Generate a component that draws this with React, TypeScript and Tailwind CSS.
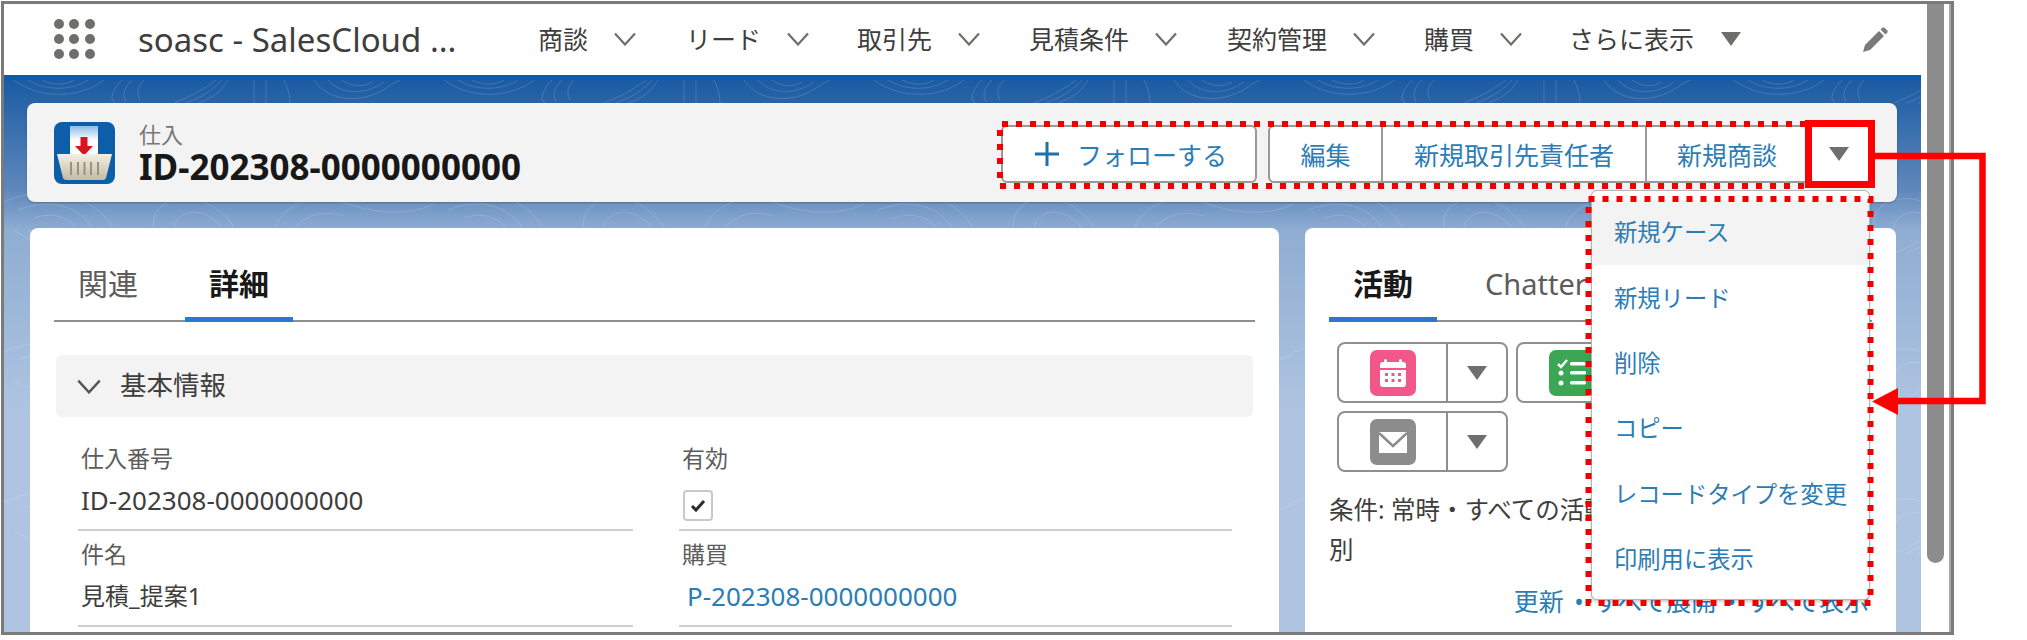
import React from "react";

const navItems = [
  { label: "商談", gap: "mr-[50px]" },
  { label: "リード", gap: "mr-[48px]" },
  { label: "取引先", gap: "mr-[49px]" },
  { label: "見積条件", gap: "mr-[50px]" },
  { label: "契約管理", gap: "mr-[49px]" },
  { label: "購買", gap: "mr-[47px]" },
];

const menuItems = ["新規ケース", "新規リード", "削除", "コピー", "レコードタイプを変更", "印刷用に表示"];

const Chevron: React.FC<{ className?: string }> = ({ className }) => (
  <svg viewBox="0 0 22 14" className={className} fill="none" stroke="currentColor" strokeWidth="2.2">
    <path d="M1 1.5 11 12.5 21 1.5" />
  </svg>
);

const Tri: React.FC<{ className?: string }> = ({ className }) => (
  <svg viewBox="0 0 20 14" className={className} fill="currentColor">
    <path d="M0 0H20L10 14Z" />
  </svg>
);

const BasketIcon = () => (
  <svg viewBox="0 0 61 62" className="h-[62px] w-[61px] shrink-0">
    <defs>
      <linearGradient id="paper" x1="0" y1="0" x2="0" y2="1">
        <stop offset="0" stopColor="#8fbde8" />
        <stop offset="0.45" stopColor="#ffffff" />
        <stop offset="1" stopColor="#ffffff" />
      </linearGradient>
      <linearGradient id="basket" x1="0" y1="0" x2="0" y2="1">
        <stop offset="0" stopColor="#f3efe2" />
        <stop offset="1" stopColor="#c2bba5" />
      </linearGradient>
    </defs>
    <rect width="61" height="62" rx="8" fill="#0d5ea8" />
    <rect x="16" y="4" width="28" height="32" fill="url(#paper)" />
    <path d="M26.500 15h7v9h5.500L30 33.500 21 24h5.500Z" fill="#d8141c" />
    <path d="M3 32h55l-6 24q-1 2-3 2H12q-2 0-3-2Z" fill="url(#basket)" />
    <path d="M17 40v13M24 40v13M30.500 40v13M37 40v13M44 40v13" stroke="#9a937f" strokeWidth="2" />
  </svg>
);

const CalendarIcon = () => (
  <svg viewBox="0 0 46 46" className="h-[46px] w-[46px] shrink-0">
    <rect width="46" height="46" rx="7" fill="#f2578a" />
    <path d="M10 15q0-3 3-3h20q3 0 3 3v3H10Z" fill="#fff" />
    <rect x="14" y="9" width="3" height="6" rx="1.500" fill="#fff" />
    <rect x="29" y="9" width="3" height="6" rx="1.500" fill="#fff" />
    <path d="M10 20h26v14q0 3-3 3H13q-3 0-3-3Z" fill="#fff" />
    <g fill="#f2578a">
      <rect x="15" y="23" width="3" height="3" />
      <rect x="21.500" y="23" width="3" height="3" />
      <rect x="28" y="23" width="3" height="3" />
      <rect x="15" y="29" width="3" height="3" />
      <rect x="21.500" y="29" width="3" height="3" />
      <rect x="28" y="29" width="3" height="3" />
    </g>
  </svg>
);

const TaskIcon = () => (
  <svg viewBox="0 0 46 46" className="h-[46px] w-[46px] shrink-0">
    <rect width="46" height="46" rx="7" fill="#3ba755" />
    <path d="M9 14l3 3 6-7" fill="none" stroke="#fff" strokeWidth="2.500" />
    <rect x="21" y="12" width="16" height="3.500" rx="1.500" fill="#fff" />
    <rect x="21" y="21" width="16" height="3.500" rx="1.500" fill="#fff" />
    <rect x="21" y="31" width="16" height="3.500" rx="1.500" fill="#fff" />
    <circle cx="12" cy="23" r="2.500" fill="#fff" />
    <circle cx="12" cy="33" r="2.500" fill="#fff" />
  </svg>
);

const MailIcon = () => (
  <svg viewBox="0 0 46 46" className="h-[46px] w-[46px] shrink-0">
    <rect width="46" height="46" rx="7" fill="#8c8c8c" />
    <path d="M9 13h28v21H9Z" fill="#fff" />
    <path d="M9 14 23 27 37 14" fill="none" stroke="#8c8c8c" strokeWidth="2.500" />
  </svg>
);

const Field: React.FC<{ label: string; children: React.ReactNode }> = ({ label, children }) => (
  <div className="flex h-[96px] flex-col border-b-2 border-[#cfcfcf]">
    <div className="mt-[9px] h-[28px] pl-[3px] text-[23px] leading-[28px] text-[#5c5c5c]">{label}</div>
    <div className="mt-[13px] h-[30px] pl-[3px] text-[24px] leading-[30px] text-[#3e3e3c]">{children}</div>
  </div>
);

const ActionButton: React.FC<{ icon: React.ReactNode }> = ({ icon }) => (
  <div className="flex h-[61px] w-[171px] items-stretch rounded-[8px] border-2 border-[#8f8f8f] bg-white">
    <div className="flex w-[109px] items-center justify-center border-r-2 border-[#8f8f8f]">{icon}</div>
    <div className="flex flex-1 items-center justify-center text-[#6f6f6f]">
      <Tri className="h-[14px] w-[20px]" />
    </div>
  </div>
);

export default function App() {
  return (
    <div className="relative h-[640px] w-[2027px] overflow-hidden bg-white font-['Noto_Sans','Noto_Sans_CJK_JP',sans-serif]">
      {/* screenshot frame */}
      <div className="ml-px mt-px flex h-[634px] w-[1953px] border-[3px] border-[#7b7b7b]">
        <div className="flex w-[1917px] shrink-0 flex-col">
          {/* nav */}
          <div className="flex h-[71px] shrink-0 items-center bg-white pb-[1px]">
            <div className="ml-[50px] grid w-[41px] grid-cols-3 gap-[5px]">
              {Array.from({ length: 9 }).map((_, i) => (
                <span key={i} className="h-[10px] w-[10px] rounded-full bg-[#706e6b]" />
              ))}
            </div>
            <div className="ml-[43px] w-[400px] whitespace-nowrap text-[33px] leading-none text-[#3e3e3c]">soasc - SalesCloud ...</div>
            {navItems.map((item) => (
              <div key={item.label} className={`flex items-center ${item.gap}`}>
                <span className="text-[25px] leading-none text-[#3e3e3c]">{item.label}</span>
                <Chevron className="ml-[26px] h-[14px] w-[22px] text-[#706e6b]" />
              </div>
            ))}
            <span className="text-[25px] leading-none text-[#3e3e3c]">さらに表示</span>
            <Tri className="ml-[27px] h-[14px] w-[20px] text-[#706e6b]" />
            <svg viewBox="0 0 25 25" className="ml-[122px] h-[25px] w-[25px] text-[#7a7a7a]" fill="currentColor">
              <path d="M0 25 2 18 16 4 21 9 7 23Z" />
              <path d="M17.500 2.500 19.500.7q1-.7 2 0l2.800 2.800q.7 1 0 2L22.500 7.500Z" />
            </svg>
          </div>

          {/* page body */}
          <div className="relative flex-1 overflow-hidden border-t-[5px] border-[#0b5cab] bg-[linear-gradient(180deg,#1b5ba3_0,#5f88bb_110px,#8fadd2_150px,#aec4e1_330px)]">
            <svg className="absolute inset-0 h-full w-full" aria-hidden="true">
              <defs>
                <pattern id="topo" width="430" height="150" patternUnits="userSpaceOnUse">
                  <g fill="none" stroke="#ffffff" strokeOpacity="0.14" strokeWidth="1">
                    <path d="M10 0c30 22 70 16 90 0M24 0c20 12 44 10 60 0M38 0c12 6 24 5 32 0" />
                    <path d="M118 0c-12 12-12 22-6 23M128 0c-8 8-10 14-6 22M140 0c-6 6-8 12-4 20" />
                    <path d="M170 23c20-8 30-14 42-23M182 23c16-6 26-12 36-23M194 23c14-5 22-10 30-23" />
                    <path d="M250 0v23M262 0v23M280 0c4 8 6 16 6 23" />
                    <path d="M310 0c14 22 50 26 78 4 4-2 6-3 8-4M324 0c12 14 36 16 56 2M338 0c8 6 20 8 30 2" />
                    <path d="M0 122c40-18 90-10 110 28M14 130c30-12 60-6 76 20M30 138c18-6 34-2 44 12" />
                    <path d="M150 150c-6-34 40-40 64-20 12 10 16 16 16 20M170 150c0-18 24-24 40-10 6 4 8 8 8 10" />
                    <path d="M270 150c10-30 44-36 74-26 30 10 60 12 86 0M290 150c10-16 30-20 50-14" />
                  </g>
                </pattern>
              </defs>
              <rect width="100%" height="100%" fill="url(#topo)" />
            </svg>

            <div className="relative flex flex-col px-[23px] pt-[23px]">
              {/* highlights panel */}
              <div className="flex h-[99px] w-[1870px] items-center rounded-[8px] bg-[#f3f3f3] pl-[27px] shadow-[0_1px_2px_rgba(0,0,0,0.25)]">
                <BasketIcon />
                <div className="ml-[24px] flex flex-col">
                  <span className="text-[22px] leading-[28px] text-[#777777]">仕入</span>
                  <span className="text-[35px] font-bold leading-[38px] text-[#181818]">ID-202308-0000000000</span>
                </div>
                <div className="ml-auto mr-[25px] mt-[3px] flex h-[58px] items-stretch text-[25px] text-[#2b7db5]">
                  <div className="flex w-[256px] items-center rounded-[6px] border-2 border-[#9a9a9a] bg-white pl-[32px]">
                    <svg viewBox="0 0 24 24" className="h-[24px] w-[24px]" fill="none" stroke="#1f6fa8" strokeWidth="3">
                      <path d="M12 0V24M0 12H24" />
                    </svg>
                    <span className="ml-[18px] pt-[4px]">フォローする</span>
                  </div>
                  <div className="ml-[11px] flex rounded-[6px] border-2 border-[#9a9a9a] bg-white">
                    <div className="flex w-[113px] items-center justify-center border-r-2 border-[#9a9a9a] pt-[4px]">編集</div>
                    <div className="flex w-[264px] items-center justify-center border-r-2 border-[#9a9a9a] pt-[4px]">新規取引先責任者</div>
                    <div className="flex w-[160px] items-center justify-center pt-[4px]">新規商談</div>
                    <div className="flex w-[63px] items-center justify-center rounded-r-[6px] text-[#6f6f6f]">
                      <Tri className="h-[14px] w-[20px]" />
                    </div>
                  </div>
                </div>
              </div>

              <div className="mt-[26px] flex gap-[26px] pl-[3px]">
                {/* details card */}
                <div className="h-[420px] w-[1249px] rounded-t-[8px] bg-white px-[24px]">
                  <div className="flex h-[94px] items-end border-b-2 border-[#8f8f8f] text-[30px]">
                    <div className="h-[62px] w-[131px] pl-[24px] pt-[8px] leading-[36px] text-[#5c5c5c]">関連</div>
                    <div className="-mb-[2px] h-[64px] w-[108px] border-b-[5px] border-[#2b78d0] pt-[8px] text-center font-bold leading-[36px] text-[#181818]">詳細</div>
                  </div>
                  <div className="ml-[2px] mr-[2px] mt-[33px] flex h-[62px] items-center rounded-[6px] bg-[#f3f3f3]">
                    <Chevron className="ml-[20px] h-[15px] w-[26px] text-[#555555]" />
                    <span className="ml-[18px] text-[26.500px] text-[#3e3e3c]">基本情報</span>
                  </div>
                  <div className="mt-[18px] flex gap-[46px] pl-[24px]">
                    <div className="w-[555px]">
                      <Field label="仕入番号">
                        <span className="text-[26px]">ID-202308-0000000000</span>
                      </Field>
                      <Field label="件名">見積_提案1</Field>
                    </div>
                    <div className="w-[553px]">
                      <Field label="有効">
                        <span className="ml-px mt-[5px] flex h-[31px] w-[30px] items-center justify-center rounded-[4px] border-2 border-[#c9c9c9] bg-white">
                          <svg viewBox="0 0 16 16" className="h-[16px] w-[16px]" fill="none" stroke="#2b2b2b" strokeWidth="3">
                            <path d="M2 8l4 4 8-9" />
                          </svg>
                        </span>
                      </Field>
                      <Field label="購買">
                        <span className="pl-[5px] text-[26px] text-[#2b7db5]">P-202308-0000000000</span>
                      </Field>
                    </div>
                  </div>
                </div>

                {/* activity card */}
                <div className="h-[420px] w-[591px] rounded-t-[8px] bg-white px-[24px]">
                  <div className="flex h-[94px] items-end border-b-2 border-[#8f8f8f] text-[29px]">
                    <div className="-mb-[2px] h-[64px] w-[108px] border-b-[5px] border-[#2b78d0] pt-[8px] text-center text-[30px] font-bold leading-[36px] text-[#181818]">活動</div>
                    <div className="ml-[48px] h-[62px] pt-[8px] leading-[36px] text-[#5c5c5c]">Chatter</div>
                  </div>
                  <div className="ml-[8px] mt-[20px] flex w-[360px] flex-wrap gap-x-[8px] gap-y-[8px]">
                    <ActionButton icon={<CalendarIcon />} />
                    <ActionButton icon={<TaskIcon />} />
                    <ActionButton icon={<MailIcon />} />
                  </div>
                  <div className="mt-[18px] whitespace-nowrap text-[24.500px] leading-[40px] text-[#3e3e3c]">
                    条件: 常時・すべての活動・すべての種
                    <br />別
                  </div>
                  <div className="mr-[3px] mt-[16px] whitespace-nowrap text-right text-[25px] leading-[30px] text-[#2b7db5] [word-spacing:4px]">更新 • すべて展開 • すべて表示</div>
                </div>
              </div>
            </div>
          </div>
        </div>

        {/* scrollbar gutter */}
        <div className="ml-[6px] flex w-[24px] shrink-0 border-r-[2px] border-[#a8a8a8]">
          <div className="h-[559px] w-[17px] rounded-b-full bg-[#8c8c8c]" />
        </div>
      </div>

      {/* actions dropdown */}
      <div className="absolute left-[1591px] top-[190px] flex h-[410px] w-[279px] flex-col rounded-[6px] border border-[#b5b5b5] bg-white pt-[9px] shadow-[0_2px_3px_rgba(0,0,0,0.2)]">
        {menuItems.map((item, i) => (
          <div
            key={item}
            className={`flex h-[65.400px] items-center pl-[22px] text-[23.300px] text-[#2b7db5] ${i === 0 ? "bg-[#f3f3f3]" : ""}`}
          >
            {item}
          </div>
        ))}
      </div>

      {/* red annotations */}
      <svg className="absolute left-0 top-0 h-[640px] w-[2027px]" fill="none" aria-hidden="true">
        <path d="M1806 124H1000V186H1806" stroke="#ee0000" strokeWidth="6" strokeDasharray="6 8" />
        <rect x="1588.500" y="199" width="282" height="404" stroke="#ee0000" strokeWidth="6" strokeDasharray="6 8" />
        <rect x="1808.500" y="123.500" width="63" height="61" stroke="#ff0000" strokeWidth="7" />
        <path d="M1875 156H1982.500V401H1895" stroke="#ff0000" strokeWidth="6.500" />
        <path d="M1872 401.500 1898 388V415Z" fill="#ff0000" />
      </svg>
    </div>
  );
}
